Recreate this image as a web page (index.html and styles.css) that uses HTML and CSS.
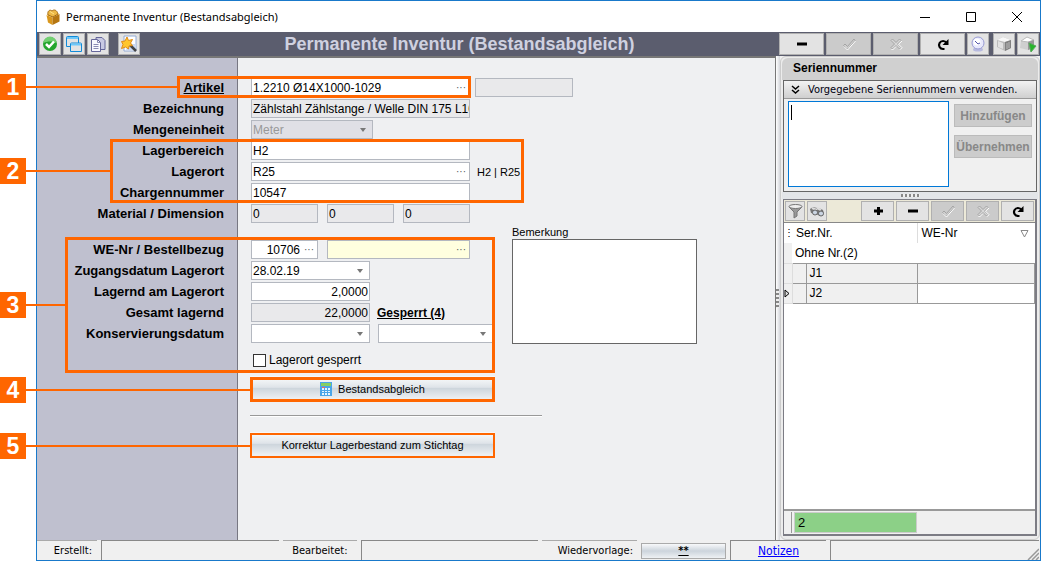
FILE: index.html
```html
<!DOCTYPE html>
<html lang="de">
<head>
<meta charset="utf-8">
<title>Permanente Inventur (Bestandsabgleich)</title>
<link rel="stylesheet" href="styles.css">
</head>
<body>
<svg class="defs" aria-hidden="true">
  <symbol id="minus" viewBox="0 0 14 14"><path d="M2 7h10" stroke="#000" stroke-width="3"/></symbol>
  <symbol id="plus" viewBox="0 0 14 14"><path d="M3 7h9M7.500 3v8" stroke="#000" stroke-width="3"/></symbol>
  <symbol id="check" viewBox="0 0 14 14"><path d="M1.500 8.500L3 7l2.500 2.500L12 2l1 1.500L6 12H5z" fill="#d0d0d0" stroke="#a4a4a4"/><path d="M2 9.500L5.500 13 13.500 4" fill="none" stroke="#fff"/></symbol>
  <symbol id="cross" viewBox="0 0 14 14"><path d="M2 3.500L3.500 2 7 5.500 10.500 2 12 3.500 8.500 7l3.500 3.500-1.500 1.500L7 8.500 3.500 12 2 10.500 5.500 7z" fill="#d8d8d8" stroke="#a4a4a4"/><path d="M13 4L9.500 7.200l3.500 3.500-2 2M2.500 12l1 1L7 9.500" fill="none" stroke="#fff"/></symbol>
  <symbol id="redo" viewBox="0 0 14 14"><path d="M8.500 12H7a4 4 0 1 1 3.500-6" fill="none" stroke="#000" stroke-width="2.200"/><path d="M12.500 2v6H6.500z"/></symbol>
</svg>
<div class="window">
  <header class="titlebar">
    <svg class="app-icon" viewBox="0 0 16 18"><path d="M1.500 7l6 2.500v7.500L3 14.500z" fill="#d9971d"/><path d="M1.500 7L6 4.500 14.500 6 7.500 9.500z" fill="#f7d680"/><path d="M7.500 9.500l7-3.500v7.500l-7 3.500z" fill="#b57611"/><path d="M3 7c-1-4 2-6 4-4 2-2 5-1 6 3l-5 3z" fill="#edb946" stroke="#a66b12"/><path d="M5 3.500L9 6" stroke="#ffe28a"/></svg>
    <h1 class="caption">Permanente Inventur (Bestandsabgleich)</h1>
    <button class="win-btn" aria-label="Minimieren"><svg viewBox="0 0 12 12"><path d="M1 6.500h10" stroke="#000"/></svg></button>
    <button class="win-btn" aria-label="Maximieren"><svg viewBox="0 0 12 12"><path d="M1.500 1.500h9v9h-9z" fill="none" stroke="#000"/></svg></button>
    <button class="win-btn" aria-label="Schließen"><svg viewBox="0 0 12 12"><path d="M1 1l10 10M11 1L1 11" stroke="#000"/></svg></button>
  </header>

  <div class="toolbar">
    <button class="tool" aria-label="OK"><svg viewBox="0 0 18 18"><circle cx="9" cy="9" r="7" fill="#23a52d"/><path d="M2.500 8a6.500 6.500 0 0 1 13 0c-4-2-9-2-13 0z" fill="#72cf71"/><path d="M5 9l3 3 5-5.500" fill="none" stroke="#fff" stroke-width="2.500"/></svg></button>
    <button class="tool" aria-label="Fenster"><svg viewBox="0 0 18 18"><path d="M1.500 2.500q0-1 1-1h10q1 0 1 1v9h-12z" fill="#e3e3e3" stroke="#118ad8"/><path d="M2 3h11" stroke="#6ec9fa" stroke-width="2"/><path d="M5.500 9q0-1 1-1h9q1 0 1 1v7.500h-11z" fill="#e3e3e3" stroke="#118ad8"/><path d="M6 9.500h10" stroke="#6ec9fa" stroke-width="2"/></svg></button>
    <button class="tool" aria-label="Kopieren"><svg viewBox="0 0 18 18"><path d="M7 2.500h6l3 3v9H7z" fill="#c8c9e3" stroke="#65669a"/><path d="M2.500 4.500h6l3 3v9h-9z" fill="#f8f8ff" stroke="#65669a"/><path d="M8.500 4.500v3h3M4.500 9.500h5M4.500 11.500h5M4.500 13.500h5" fill="none" stroke="#8a8bb4"/></svg></button>
    <button class="tool spaced" aria-label="Assistent"><svg viewBox="0 0 18 18"><path d="M4 1h12v15H4z" fill="#fff" stroke="#94abd4"/><path d="M9 9h7v6H6z" fill="#cad9f2"/><path d="M9 9l7 7" stroke="#444" stroke-width="2.500"/><path d="M7 2l1.500 3.500 4-1-2 3.500 2 2.500-3.500.5-.5 3-3-2-4 1.500 1.500-4L1.500 6.500l3.500-.5z" fill="#ffc62e" stroke="#e08a16"/></svg></button>
    <h2 class="toolbar-title">Permanente Inventur (Bestandsabgleich)</h2>
    <button class="tool wide" aria-label="Löschen"><svg><use href="#minus"/></svg></button>
    <button class="tool wide" disabled aria-label="Speichern"><svg><use href="#check"/></svg></button>
    <button class="tool wide" disabled aria-label="Verwerfen"><svg><use href="#cross"/></svg></button>
    <button class="tool wide" aria-label="Aktualisieren"><svg><use href="#redo"/></svg></button>
    <button class="tool" aria-label="Verlauf"><svg viewBox="0 0 18 18"><ellipse cx="9" cy="14.500" rx="5" ry="2" fill="#b7badf"/><circle cx="9" cy="8" r="6" fill="#e8e9fc" stroke="#999cd4"/><circle cx="8" cy="7" r="3.500" fill="#fff"/><path d="M6 6l3 3 2-1" fill="none" stroke="#5154a8"/></svg></button>
    <button class="tool apart" aria-label="Objekt"><svg viewBox="0 0 18 18"><path d="M2 5l6-3 8 3v8l-6 3-8-4z" fill="#bbb"/><path d="M2 5l6-3 8 3-6 2z" fill="#f7f7f7"/><path d="M10 7l6-2v8l-6 3z" fill="#818181"/><path d="M3 6l5 2v6l-5-2z" fill="#e2e2e2"/><path d="M12 8v6M14 7v6" stroke="#bbb"/></svg></button>
    <button class="tool" aria-label="Objekt ausführen"><svg viewBox="0 0 18 18"><path d="M2 6l6-4 7 3v8l-6 2-8-2z" fill="#cfcfcf"/><path d="M2 6l6-4 7 3-6 2z" fill="#fff" stroke="#bbb"/><path d="M9 7l6-2v8l-6 2z" fill="#999"/><path d="M10 8l7 3-5 6z" fill="#27b52b" stroke="#57a85a"/></svg></button>
  </div>

  <div class="workspace">
    <form class="form">
      <div class="row"><label class="label link" for="artikel">Artikel</label><span class="field w-full"><input id="artikel" value="1.2210 Ø14X1000-1029"><button type="button" class="dots" aria-label="Artikel suchen">···</button></span><span class="field w-extra ro"><input disabled aria-label="Zusatz"></span></div>
      <div class="row"><label class="label" for="bez">Bezeichnung</label><span class="field w-full ro"><input id="bez" readonly value="Zählstahl Zählstange / Welle DIN 175 L1000"></span></div>
      <div class="row"><label class="label" for="einheit">Mengeneinheit</label><select id="einheit" class="field w-unit ro" disabled><option>Meter</option></select></div>
      <div class="row"><label class="label" for="bereich">Lagerbereich</label><span class="field w-full"><input id="bereich" value="H2"></span></div>
      <div class="row"><label class="label" for="ort">Lagerort</label><span class="field w-full"><input id="ort" value="R25"><button type="button" class="dots" aria-label="Lagerort suchen">···</button></span><span class="hint">H2 | R25</span></div>
      <div class="row"><label class="label" for="charge">Chargennummer</label><span class="field w-full"><input id="charge" value="10547"></span></div>
      <div class="row"><label class="label" for="dim">Material / Dimension</label><span class="triple"><span class="field w-small ro"><input id="dim" readonly value="0"></span><span class="field w-small ro"><input readonly value="0" aria-label="Dimension 2"></span><span class="field w-small ro"><input readonly value="0" aria-label="Dimension 3"></span></span></div>

      <div class="group">
        <div class="group-rows">
          <div class="row"><label class="label" for="wenr">WE-Nr / Bestellbezug</label><span class="triple"><span class="field w-small num"><input id="wenr" value="10706"><button type="button" class="dots" aria-label="WE-Nr suchen">···</button></span><span class="field w-order yellow"><input aria-label="Bestellbezug"><button type="button" class="dots" aria-label="Bestellung suchen">···</button></span></span></div>
          <div class="row"><label class="label" for="zugang">Zugangsdatum Lagerort</label><select id="zugang" class="field w-date"><option>28.02.19</option></select></div>
          <div class="row"><label class="label" for="lagernd">Lagernd am Lagerort</label><span class="field w-date num"><input id="lagernd" value="2,0000"></span></div>
          <div class="row"><label class="label" for="gesamt">Gesamt lagernd</label><span class="field w-date num ro"><input id="gesamt" readonly value="22,0000"></span><a class="locked" href="#">Gesperrt (4)</a></div>
          <div class="row"><label class="label" for="kons">Konservierungsdatum</label><select id="kons" class="field w-date"><option></option></select><select class="field w-second" aria-label="Konservierungsart"><option></option></select></div>
        </div>
        <div class="note"><label for="bemerkung">Bemerkung</label><textarea id="bemerkung"></textarea></div>
      </div>

      <div class="content">
        <label class="tick"><input type="checkbox">Lagerort gesperrt</label>
        <button type="button" class="action"><svg viewBox="0 0 12 14"><path d="M0 0h12v14H0z" fill="#4aa5e8"/><path d="M1 1h10v3H1z" fill="#86cf62"/><path d="M2 6h2v2H2zM5 6h2v2H5zM8 6h2v2H8zM2 9h2v1H2zM5 9h2v1H5zM8 9h2v1H8zM2 11h2v2H2zM5 11h2v2H5zM8 11h2v2H8z" fill="#e6f5ff"/><path d="M2 5h3v1H2z" fill="#e66"/></svg>Bestandsabgleich</button>
        <hr class="rule">
        <button type="button" class="action">Korrektur Lagerbestand zum Stichtag</button>
      </div>
    </form>
    <div class="splitter"><span class="grip"></span></div>
    <aside class="side">
      <h3 class="side-title">Seriennummer</h3>
      <section class="preset">
        <button class="preset-head"><svg viewBox="0 0 9 9"><path d="M1 1l3.500 3L8 1M1 5l3.500 3L8 5" fill="none" stroke="#000" stroke-width="1.500"/></svg>Vorgegebene Seriennummern verwenden.</button>
        <div class="preset-body">
          <span class="serial-box"><span class="caret"></span><textarea aria-label="Seriennummern"></textarea></span>
          <div class="preset-actions"><button disabled>Hinzufügen</button><button disabled>Übernehmen</button></div>
        </div>
      </section>
      <div class="hsplit"><span class="grip flat"></span></div>
      <section class="list">
        <div class="list-tools">
          <button class="tool small" aria-label="Filter"><svg viewBox="0 0 16 16"><path d="M2 4l5 5v6l3-2V9l5-5z" fill="#999" stroke="#777"/><ellipse cx="8.500" cy="3.500" rx="6.500" ry="2" fill="#eee" stroke="#777"/></svg></button>
          <button class="tool small" aria-label="Suchen"><svg viewBox="0 0 16 16"><path d="M1 6l3-2 4 1 2 0 4 2 1 4-4 2-4-2-5-1z" fill="#777"/><path d="M3 5l5 2M8 5l4 2" stroke="#ddd" stroke-width="2"/><circle cx="6" cy="9.500" r="2.500" fill="#cbd5e2" stroke="#666"/><circle cx="12" cy="10.500" r="2.500" fill="#cbd5e2" stroke="#666"/></svg></button>
          <span class="fill"></span>
          <button class="tool mid" aria-label="Neu"><svg><use href="#plus"/></svg></button>
          <button class="tool mid" aria-label="Entfernen"><svg><use href="#minus"/></svg></button>
          <button class="tool mid" disabled aria-label="Übernehmen"><svg><use href="#check"/></svg></button>
          <button class="tool mid" disabled aria-label="Abbrechen"><svg><use href="#cross"/></svg></button>
          <button class="tool mid" aria-label="Neu laden"><svg><use href="#redo"/></svg></button>
        </div>
        <table class="serials">
          <colgroup><col class="c-mark"><col class="c-indent"><col class="c-ser"><col></colgroup>
          <thead><tr><th class="mark">⋮</th><th colspan="2">Ser.Nr.</th><th><span class="sort-head">WE-Nr<svg viewBox="0 0 9 9"><path d="M1 1.500h7L4.500 8z" fill="none" stroke="#888"/></svg></span></th></tr></thead>
          <tbody>
            <tr class="plain"><td class="mark"></td><td colspan="3">Ohne Nr.(2)</td></tr>
            <tr class="gray"><td class="mark"></td><td class="indent"></td><td>J1</td><td></td></tr>
            <tr><td class="mark"><svg viewBox="0 0 6 9"><path d="M1 1l4 3.500L1 8z" fill="#ddd" stroke="#000"/></svg></td><td class="indent"></td><td class="shade">J2</td><td></td></tr>
          </tbody>
        </table>
        <div class="list-foot"><span class="foot-mark"></span><output class="sum">2</output></div>
      </section>
    </aside>
  </div>

  <footer class="status">
    <span class="s-label s-a">Erstellt:</span><span class="s-panel"></span>
    <span class="s-label s-b">Bearbeitet:</span><span class="s-panel"></span>
    <span class="s-label s-c">Wiedervorlage:</span><button class="s-btn">**</button>
    <span class="s-link"><a href="#">Notizen</a></span>
    <span class="s-last"><svg viewBox="0 0 12 12"><path d="M1 12L12 1M5 12l7-7M9 12l3-3" stroke="#999" stroke-width="1.500"/></svg></span>
  </footer>
</div>

<div class="callout c1"><b>1</b><i></i><span></span></div>
<div class="callout c2"><b>2</b><i></i><span></span></div>
<div class="callout c3"><b>3</b><i></i><span></span></div>
<div class="callout c4"><b>4</b><i></i><span></span></div>
<div class="callout c5"><b>5</b><i></i><span></span></div>
</body>
</html>
```
FILE: styles.css
```css
* { box-sizing: border-box; }
body { margin: 0; padding-left: 36px; position: relative; min-height: 100vh; display: flex; background: #fff; color: #000; font: 14px/16px "Liberation Sans", Arial, sans-serif; }
h1, h2, h3 { margin: 0; }
button, input, select, textarea { font: inherit; color: inherit; margin: 0; padding: 0; border: 0; border-radius: 0; }
svg { display: block; flex: none; }
.defs { position: absolute; width: 0; height: 0; }
.window { flex: 1; min-width: 0; display: flex; flex-direction: column; border: 1px solid #1979ca; }

.titlebar { height: 31px; display: flex; align-items: center; padding-left: 8px; background: #fff; }
.app-icon { width: 16px; height: 18px; }
.caption { flex: 1; margin-left: 5px; font: 11px/16px "Noto Sans", sans-serif; }
.win-btn { width: 46px; height: 30px; background: none; display: flex; align-items: center; justify-content: center; }
.win-btn svg { width: 12px; height: 12px; }

.toolbar { height: 24px; display: flex; align-items: center; gap: 2px; padding: 0 1px 0 2px; background: #5b5d6e; }
.toolbar-title { flex: 1; text-align: center; font-size: 18px; line-height: 22px; color: #cfd1e0; }
.tool { width: 22px; height: 22px; flex: none; background: #e3e3e3; border: 1px solid #b0b0b0; display: flex; align-items: center; justify-content: center; }
.tool svg { width: 18px; height: 18px; }
.tool.spaced { margin-left: 7px; }
.tool.apart { margin-left: 2px; }
.tool.wide { width: 45px; }
.tool.wide svg, .tool.mid svg { width: 14px; height: 14px; }
.tool:disabled { background: #cbcbcb; }
.tool.small { width: 20px; height: 20px; }
.tool.small svg { width: 16px; height: 16px; }
.tool.mid { width: 33px; height: 20px; }

.workspace { flex: 1; display: flex; min-height: 0; background: #f0f0f0; }
.form { flex: 1; min-width: 0; padding-top: 20px; border-top: 2px solid #777; border-right: 1px solid #777; background: linear-gradient(90deg, #bfc0cf 200px, #777782 200px, #777782 201px, #eff0f2 201px); }
.row { display: flex; align-items: center; height: 19px; margin-bottom: 2px; }
.label { flex: none; width: 187px; margin-right: 27px; text-align: right; font-weight: bold; font-size: 13px; }
.link { text-decoration: underline; }
.field { flex: none; display: flex; align-items: center; height: 19px; border: 1px solid #b4b8c0; background: #fff; overflow: hidden; }
.field input { flex: 1; min-width: 0; width: 0; height: 17px; padding-left: 1px; background: none; outline: 0; font-size: 12px; }
.num input { text-align: right; padding-right: 1px; }
.ro { background: #e9e9eb; }
.yellow { background: #ffffdf; }
.dots { width: 16px; background: none; font-size: 10px; line-height: 14px; color: #555; }
select.field { appearance: none; padding-left: 1px; font-size: 12px; background: #fff url("data:image/svg+xml,%3Csvg xmlns='http://www.w3.org/2000/svg' width='6' height='4'%3E%3Cpath d='M0 0h6L3 4z' fill='%23777'/%3E%3C/svg%3E") no-repeat right 6px center; }
select.field:disabled { color: #999; opacity: 1; background-color: #e0e0e6; }
.w-full { width: 219px; }
.w-extra { width: 98px; margin-left: 5px; }
.w-unit { width: 122px; }
.w-small { width: 67px; }
.w-order { width: 143px; }
.w-date { width: 119px; }
.w-second { width: 115px; margin-left: 8px; }
.triple { display: flex; gap: 9px; }
.hint { margin-left: 7px; font-size: 11px; }
.locked { margin-left: 7px; font-size: 12px; font-weight: bold; color: #000; }
.group { display: flex; }
.group-rows { width: 475px; padding-top: 15px; }
.note { display: flex; flex-direction: column; font-size: 11px; line-height: 14px; }
.note textarea { width: 185px; height: 105px; border: 1px solid #666; resize: none; }
.content { margin-left: 213px; display: flex; flex-direction: column; align-items: flex-start; }
.tick { display: flex; align-items: center; gap: 3px; margin: 7px 0 8px 3px; font-size: 12px; }
.tick input { appearance: none; width: 13px; height: 13px; border: 1px solid #333; background: #fff; }
.action { width: 245px; height: 25px; display: flex; align-items: center; justify-content: center; gap: 6px; font-size: 11px; background: linear-gradient(#f6f8f9 10%, #dfe4e9 45%, #ced6dd 50%, #eceff2 90%); }
.action svg { width: 12px; height: 14px; }
.rule { width: 292px; height: 2px; margin: 14px 0 15px; border: 0; border-top: 1px solid #999; background: #fff; }

.splitter { width: 4px; display: flex; align-items: center; background: linear-gradient(90deg, #fff, #d5d7dc); }
.grip { width: 3px; height: 19px; background: repeating-linear-gradient(#888 0 2px, #eee 2px 4px); }
.grip.flat { width: 19px; height: 3px; background: repeating-linear-gradient(90deg, #888 0 2px, #eee 2px 4px); }
.side { width: 260px; flex: none; display: flex; flex-direction: column; padding: 1px 1px 3px; border: 1px solid #ccc; background: #ececec; border-radius: 6px; }
.side-title { height: 22px; padding-left: 11px; font-size: 12px; line-height: 20px; background: #d0d0d0; border-radius: 6px 6px 0 0; }
.preset { margin: 0 1px; border: 1px solid #666; background: #f0f0f0; }
.preset-head { width: 100%; height: 18px; display: flex; align-items: center; gap: 8px; padding-left: 7px; font: 11px/16px "DejaVu Sans Condensed", "DejaVu Sans", sans-serif; color: #001; background: linear-gradient(#f2f2f2, #cfcfcf); border-bottom: 1px solid #999; }
.preset-head svg { width: 9px; height: 9px; }
.preset-body { display: flex; gap: 5px; padding: 2px 4px 4px; }
.serial-box { flex: none; width: 161px; height: 86px; display: flex; padding: 3px 2px; border: 1px solid #0078d7; background: #fff; }
.serial-box textarea { flex: 1; min-width: 0; resize: none; outline: 0; background: none; }
.caret { width: 1px; height: 15px; background: #000; }
.preset-actions { flex: 1; display: flex; flex-direction: column; gap: 8px; padding-top: 3px; }
.preset-actions button { height: 23px; background: #ccc; border: 1px solid #bbb; color: #888; font-size: 12px; font-weight: bold; white-space: nowrap; }
.hsplit { height: 7px; display: flex; align-items: center; justify-content: center; background: #e3e5e8; }
.list { flex: 1; display: flex; flex-direction: column; margin: 0 1px; border: 1px solid #7c7c84; border-right-width: 2px; border-bottom-width: 2px; background: #fff; }
.list-tools { height: 23px; display: flex; align-items: center; gap: 2px; padding: 0 1px; background: #ece9d8; border-bottom: 1px solid #888; }
.fill { flex: 1; }
.serials { width: 100%; border-collapse: collapse; table-layout: fixed; font-size: 12px; }
.c-mark { width: 8px; }
.c-indent { width: 14px; }
.c-ser { width: 111px; }
.serials th { height: 20px; padding: 0 4px; font-weight: normal; text-align: left; }
.serials th + th + th { border-left: 1px solid #ddd; }
.sort-head { display: flex; align-items: center; justify-content: space-between; padding-right: 2px; }
.sort-head svg { width: 9px; height: 9px; }
.serials td { height: 20px; padding: 0 3px; border: 1px solid #999; line-height: 16px; }
.serials .plain td { height: 20px; border-top: 0; border-left: 0; border-right: 0; }
.serials .mark { padding: 0; border-left: 0; font-size: 10px; background: #f0f0f0; border-color: #ddd; }
.serials th.mark { background: #fff; }
.mark svg { width: 6px; height: 9px; }
.serials .indent, .serials .shade, .gray td { background: #f0f0f0; }
.serials .gray .indent { border-bottom: 0; }
.list-foot { height: 25px; margin-top: auto; display: flex; gap: 2px; padding: 1px 0 1px; background: #f0f0f0; border-top: 2px solid #999; }
.foot-mark { width: 8px; border-right: 1px solid #999; }
.sum { width: 123px; padding-left: 3px; font-size: 13px; line-height: 20px; background: #8cd087; border: 1px solid #ccc; }

.status { height: 20px; display: flex; gap: 4px; padding-right: 1px; background: #f0f0f0; font: 11px/20px "DejaVu Sans Condensed", "DejaVu Sans", sans-serif; }
.s-label { border-top: 1px solid #aaa; text-align: right; white-space: nowrap; padding-right: 5px; }
.s-a { width: 60px; }
.s-b { width: 74px; padding-right: 9px; }
.s-c { width: 95px; padding-right: 4px; }
.s-panel { flex: 1; border-top: 1px solid #888; border-left: 1px solid #888; }
.s-btn { width: 85px; height: 16px; margin-top: 3px; background: linear-gradient(#f8f9fa, #ccd4dc 50%, #eef1f4); border: 1px solid #aaa; line-height: 14px; font-weight: bold; text-decoration: underline; }
.s-link { width: 96px; text-align: center; border-top: 1px solid #888; border-left: 1px solid #888; }
.s-link a { color: #00f; font-size: 12px; }
.s-last { width: 209px; display: flex; justify-content: flex-end; align-items: flex-end; border-top: 1px solid #888; border-left: 1px solid #888; }
.s-last svg { width: 12px; height: 12px; }

.callout { position: absolute; left: 0; display: flex; align-items: center; pointer-events: none; }
.callout b { width: 26px; height: 26px; flex: none; background: #f60; color: #fff; font-size: 23px; line-height: 27px; text-align: center; }
.callout i { flex: 1; height: 2px; background: #f60; }
.callout span { align-self: stretch; flex: none; border: 3px solid #f60; }
.c1 { top: 76px; width: 471px; height: 22px; }
.c1 span { width: 294px; }
.c2 { top: 139px; width: 524px; height: 64px; }
.c2 span { width: 414px; }
.c3 { top: 237px; width: 495px; height: 136px; }
.c3 span { width: 430px; }
.c4 { top: 377px; width: 495px; height: 25px; }
.c4 span { width: 245px; }
.c5 { top: 433px; width: 495px; height: 25px; }
.c5 span { width: 245px; border-width: 2px; }
```
